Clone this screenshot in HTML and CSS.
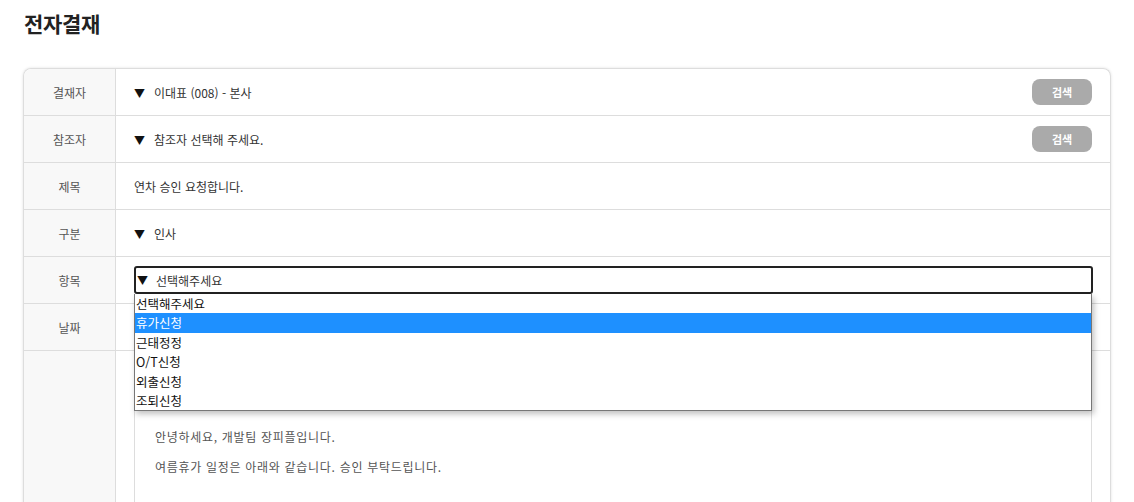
FILE: index.html
```html
<!DOCTYPE html>
<html lang="ko">
<head>
  <meta charset="UTF-8" />
  <meta name="viewport" content="width=device-width, initial-scale=1.0"/>
  <title>전자결재</title>
  <link rel="stylesheet" href="styles.css">
</head>
<body>
  <h1>전자결재</h1>

  <div class="card">
    <div class="row">
      <div class="label">결재자</div>
      <div class="value">
        <span class="pick"><span class="arrow">▼</span>이대표 (008) - 본사</span>
        <button class="search">검색</button>
      </div>
    </div>
    <div class="row">
      <div class="label">참조자</div>
      <div class="value">
        <span class="pick"><span class="arrow">▼</span>참조자 선택해 주세요.</span>
        <button class="search">검색</button>
      </div>
    </div>
    <div class="row">
      <div class="label">제목</div>
      <div class="value">연차 승인 요청합니다.</div>
    </div>
    <div class="row">
      <div class="label">구분</div>
      <div class="value"><span class="pick"><span class="arrow">▼</span>인사</span></div>
    </div>
    <div class="row">
      <div class="label">항목</div>
      <div class="value dropdown">
        <div class="select"><span class="arrow">▼</span>선택해주세요</div>
        <!-- open option list -->
        <ul class="options">
          <li>선택해주세요</li>
          <li class="active">휴가신청</li>
          <li>근태정정</li>
          <li>O/T신청</li>
          <li>외출신청</li>
          <li>조퇴신청</li>
        </ul>
      </div>
    </div>
    <div class="row">
      <div class="label">날짜</div>
      <div class="value"></div>
    </div>
    <div class="row tall">
      <div class="label"></div>
      <div class="value">
        <div class="editor">
          <p>안녕하세요, 개발팀 장피플입니다.</p>
          <p>여름휴가 일정은 아래와 같습니다. 승인 부탁드립니다.</p>
        </div>
      </div>
    </div>
  </div>
</body>
</html>
```

FILE: styles.css
```css
body {
  margin: 0;
  padding: 0 23px;
  font-family: "Noto Sans CJK KR", "Noto Sans", sans-serif;
  background: #fff;
  color: #333;
}

h1 {
  margin: 9px 0 0 1px;
  font-size: 21px;
  line-height: 28px;
  font-weight: bold;
  letter-spacing: -0.3px;
  color: #222;
}

.card {
  margin-top: 31px;
  border: 1px solid #ddd;
  border-bottom: none;
  border-radius: 8px 8px 0 0;
  box-shadow: 0 0 3px rgba(0, 0, 0, 0.12);
}

.row {
  display: flex;
  height: 46px;
  border-bottom: 1px solid #ddd;
}

.row:first-child .label {
  border-top-left-radius: 8px;
}

.label {
  width: 91px;
  flex-shrink: 0;
  display: flex;
  align-items: center;
  justify-content: center;
  background: #f8f8f8;
  border-right: 1px solid #ddd;
  font-size: 12px;
  color: #555;
}

.value {
  flex: 1;
  display: flex;
  align-items: center;
  justify-content: space-between;
  padding: 0 18px 0 18px;
  font-size: 12px;
  color: #333;
}

.arrow {
  font-size: 11px;
  margin-right: 9px;
  color: #111;
}

.search {
  width: 60px;
  height: 26px;
  border: none;
  border-radius: 8px;
  background: #aaa;
  color: #fff;
  font-family: inherit;
  font-size: 11px;
  font-weight: bold;
}

.dropdown {
  position: relative;
}

.select {
  flex: 1;
  height: 24px;
  margin-right: -1px;
  display: flex;
  align-items: center;
  padding-left: 1px;
  border: 2px solid #222;
  border-radius: 3px;
  font-size: 12px;
  color: #333;
}

.select .arrow {
  margin-right: 8px;
}

.options {
  position: absolute;
  top: 37px;
  left: 18px;
  right: 18px;
  margin: 0;
  padding: 0;
  list-style: none;
  background: #fff;
  border: 1px solid #777;
  border-top: none;
  box-shadow: 2px 3px 6px rgba(0, 0, 0, 0.25);
  z-index: 2;
}

.options li {
  height: 19.4px;
  line-height: 19px;
  padding-left: 1px;
  font-size: 12.5px;
  color: #111;
}

.options li.active {
  background: #1e90ff;
  color: #fff;
}

.row.tall {
  height: 200px;
  border-bottom: none;
}

.row.tall .value {
  align-items: flex-start;
}

.editor {
  flex: 1;
  align-self: stretch;
  margin-top: 10px;
  padding: 65px 20px 0 20px;
  border: 1px solid #ddd;
  border-bottom: none;
  font-size: 12px;
  letter-spacing: 0.7px;
  color: #555;
}

.editor p {
  margin: 0 0 10px;
  line-height: 20px;
}
```
